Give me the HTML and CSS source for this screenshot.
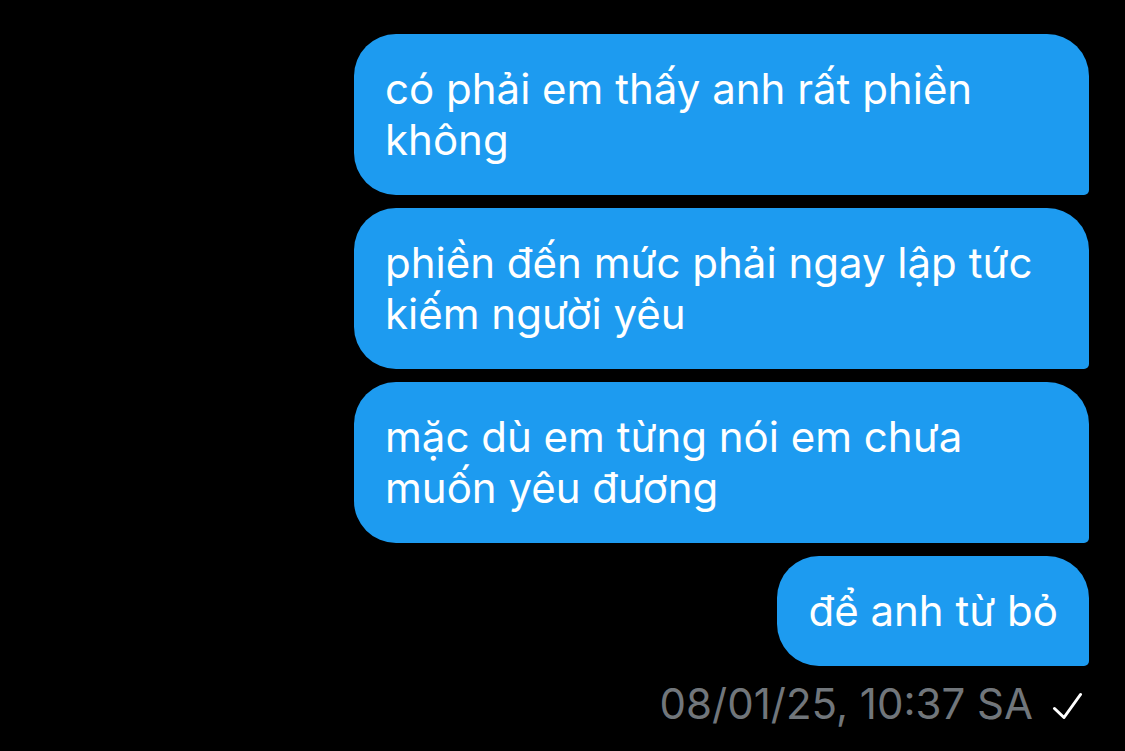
FILE: index.html
```html
<!DOCTYPE html>
<html lang="vi">
<head>
<meta charset="utf-8">
<link rel="stylesheet" href="styles.css">
</head>
<body>
<div class="chat">
  <div class="bubble">có phải em thấy anh rất phiền không</div>
  <div class="bubble">phiền đến mức phải ngay lập tức kiếm người yêu</div>
  <div class="bubble">mặc dù em từng nói em chưa muốn yêu đương</div>
  <div class="bubble">để anh từ bỏ</div>
  <div class="meta">
    <span class="time">08/01/25, 10:37 SA</span>
    <svg class="check" width="32" height="30" viewBox="0 0 32 30"><polyline points="3.5,19.5 13,28.5 29.5,5.5" fill="none" stroke="#fff" stroke-width="3" stroke-linecap="round" stroke-linejoin="round"/></svg>
  </div>
</div>
</body>
</html>
```

FILE: styles.css
```css
html, body {
  margin: 0;
  background: #000;
}
body {
  font-family: Inter, "Noto Sans", sans-serif;
  -webkit-font-smoothing: antialiased;
}
.chat {
  display: flex;
  flex-direction: column;
  align-items: flex-end;
  gap: 13px;
  padding: 34px 36px 0 0;
}
.bubble {
  box-sizing: border-box;
  max-width: 735px;
  background: #1d9bf0;
  color: #fff;
  font-size: 42px;
  line-height: 51px;
  padding: 29px 31px 30px;
  border-radius: 42px 42px 5px 42px;
}
.meta {
  display: flex;
  align-items: center;
  gap: 18px;
  margin-top: 0;
  margin-right: 6px;
}
.time {
  color: #71767b;
  font-size: 42px;
  line-height: 50px;
}
.check {
  display: block;
}
```
